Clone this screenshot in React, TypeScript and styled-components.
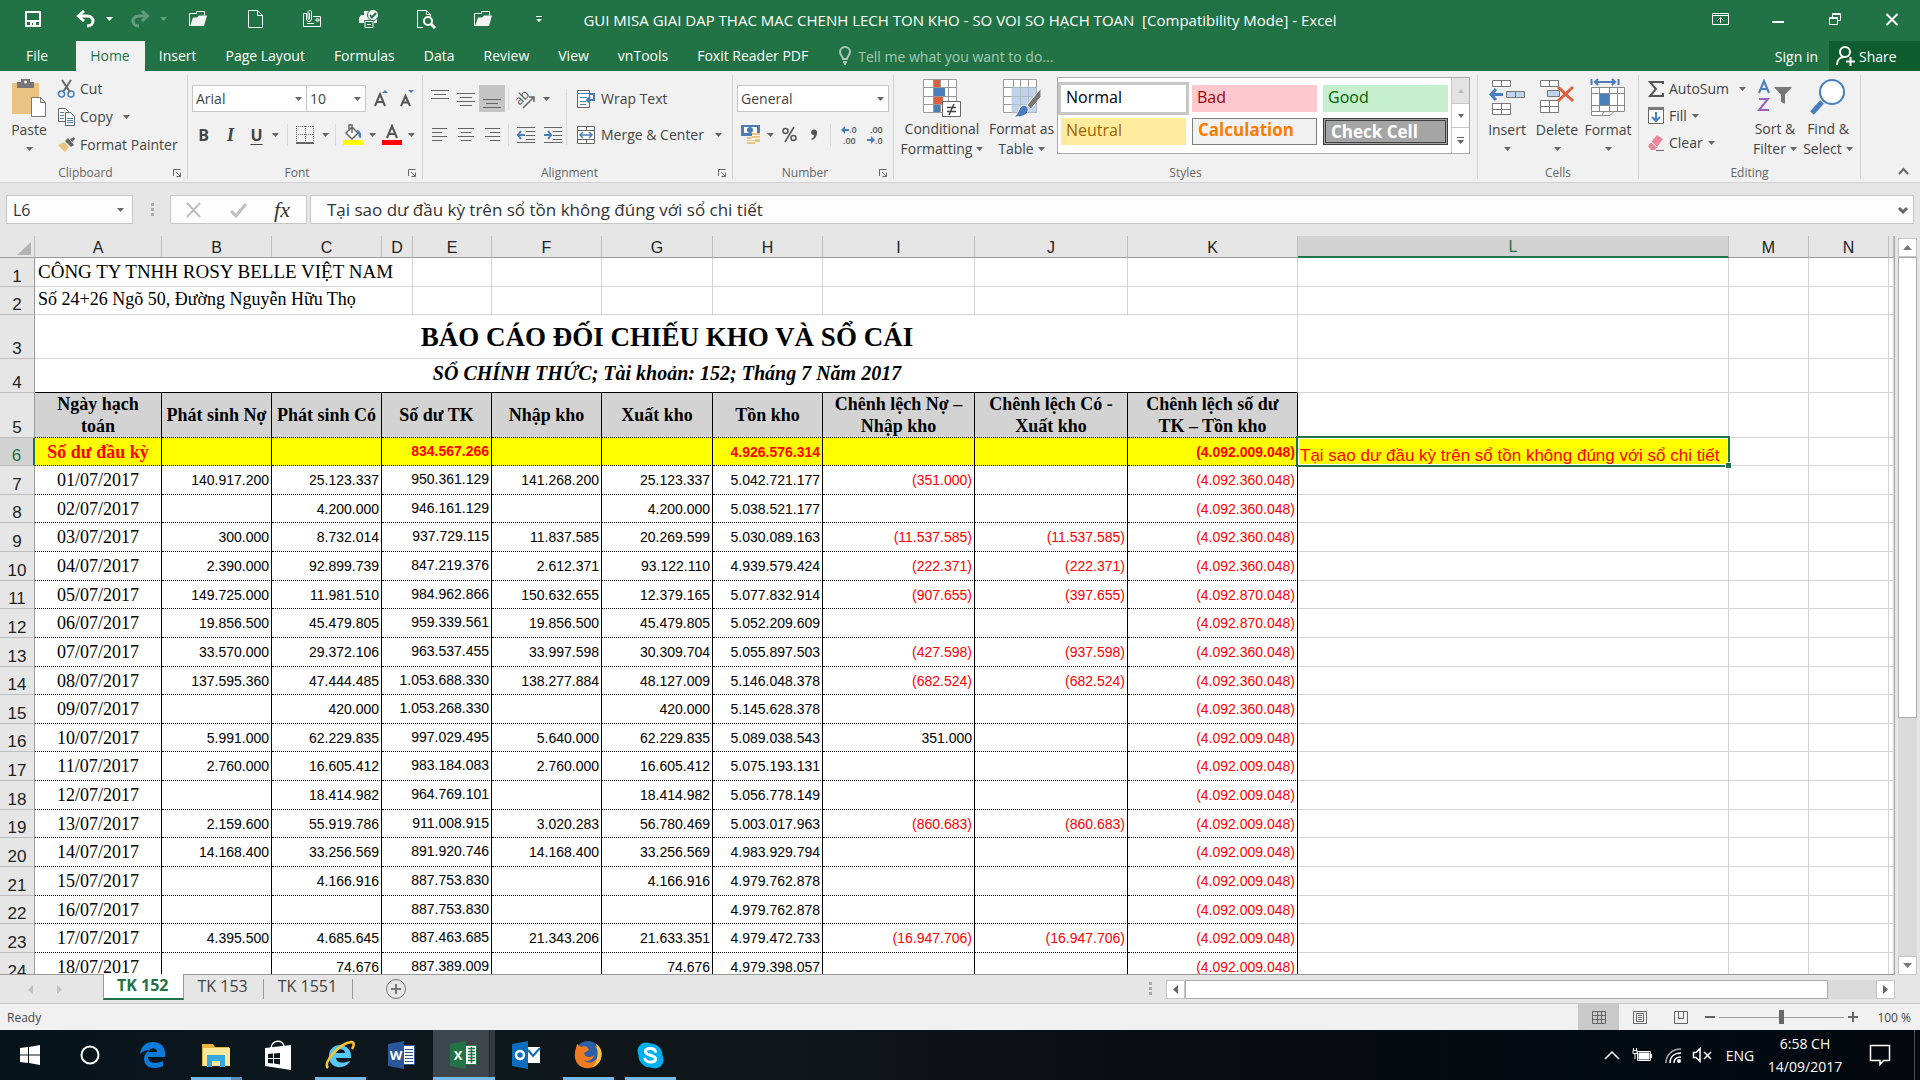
import React from "react";
import styled, { createGlobalStyle, css } from "styled-components";

const ui = '"Open Sans", "Noto Sans", sans-serif';
const arial = '"Liberation Sans", Arial, sans-serif';
const times = '"Liberation Serif", "Times New Roman", serif';
const green = "#217346";
const line = "#c6c6c6";
const ink = "#444444";
const blue = "#4a7ebb";

const Global = createGlobalStyle`
  *, *::before, *::after { box-sizing: border-box; }
  body { margin: 0; font-family: ${ui}; font-size: 14px; color: ${ink}; }
  button, input, select { font: inherit; color: inherit; margin: 0; padding: 0; border: 0; border-radius: 0; background: none; outline: none; }
  svg { display: block; flex: none; overflow: visible; }
`;

const Screen = styled.div`
  display: flex;
  flex-direction: column;
  height: 100vh;
  overflow: hidden;
  background: #e6e6e6;
`;

/* ---------- shared drawing helpers ---------- */

type IconProps = { w: number; h: number; children: React.ReactNode; stroke?: string; sw?: number };
const Icon = ({ w, h, children, stroke = "#666", sw = 1 }: IconProps) => (
  <svg width={w} height={h} viewBox={`0 0 ${w} ${h}`} fill="none" stroke={stroke} strokeWidth={sw} aria-hidden="true">
    {children}
  </svg>
);
const Down = ({ color = "#666" }: { color?: string }) => (
  <Icon w={7} h={4} stroke="none"><path d="M0 0h7L3.5 4z" fill={color} /></Icon>
);
const DotsV = () => (
  <Icon w={4} h={14} stroke="none"><path d="M1 0h3v3h-3zM1 5h3v3h-3zM1 10h3v3h-3z" fill="#ababab" /></Icon>
);

/* ---------- title bar ---------- */

const TitleBar = styled.header`
  display: grid;
  grid-template-columns: minmax(0, 1fr) auto minmax(0, 1fr);
  height: 41px;
  flex: none;
  background: ${green};
  color: #fff;
`;
const QuickAccess = styled.div`
  display: flex;
  align-items: center;
  gap: 25px;
  height: 38px;
  padding-left: 17px;
`;
const QuickPair = styled.div`
  display: flex;
  gap: 8px;
  margin: 0 -13px 0 -4px;
`;
const QuickButton = styled.button<{ $w?: number; $dim?: boolean }>`
  display: flex;
  align-items: center;
  justify-content: center;
  width: ${(p) => p.$w ?? 32}px;
  height: 28px;
  opacity: ${(p) => (p.$dim ? 0.3 : 1)};
`;
const SplitIcon = styled.div`
  display: flex;
`;
const DocTitle = styled.h1`
  margin: 0;
  font-size: 15px;
  font-weight: 400;
  line-height: 41px;
  white-space: pre;
`;
const WindowControls = styled.div`
  display: flex;
  justify-content: flex-end;
`;
const WindowButton = styled.button`
  display: flex;
  align-items: center;
  justify-content: center;
  width: 57px;
  height: 38px;
`;

const FolderIcon = () => (
  <Icon w={18} h={16} stroke="#fff">
    <path d="M.5 15V2.500h7v-2h8v4" />
    <path d="M1 15L4 6.500h4l2-2h8L15 15z" fill="#f2f2f2" stroke="none" />
  </Icon>
);

/* ---------- ribbon tabs ---------- */

const TabBar = styled.nav`
  display: flex;
  height: 30px;
  flex: none;
  background: ${green};
  color: #fff;
`;
const RibbonTab = styled.button<{ $active?: boolean; $file?: boolean }>`
  padding: ${(p) => (p.$file ? "0 28px 0 26px" : "0 15px 0 14px")};
  line-height: 30px;
  white-space: nowrap;
  ${(p) => p.$active && css`background: #f1f1f1; color: ${green};`}
`;
const TellMe = styled.label`
  display: flex;
  align-items: center;
  gap: 7px;
  flex: 1;
  padding-left: 16px;
`;
const TellMeInput = styled.input`
  flex: 1;
  min-width: 0;
  height: 28px;
  &::placeholder { color: #a6c7b5; opacity: 1; }
`;
const SignIn = styled.button`
  padding: 0 11px;
`;
const ShareButton = styled.button`
  display: flex;
  align-items: center;
  gap: 4px;
  width: 91px;
  padding-left: 7px;
  background: #0f5c2f;
`;

/* ---------- ribbon ---------- */

const Ribbon = styled.section`
  display: flex;
  flex: none;
  height: 112px;
  padding: 4px 0 3px;
  background: #f1f1f1;
  border-bottom: 1px solid #d2d2d2;
`;
const GroupBox = styled.section<{ $w: number; $grow?: boolean }>`
  display: flex;
  flex-direction: column;
  flex: ${(p) => (p.$grow ? 1 : 0)} 0 ${(p) => p.$w}px;
  border-right: 1px solid #d2d2d2;
`;
const GroupBody = styled.div<{ $indent?: number }>`
  display: flex;
  flex: 1;
  padding-left: ${(p) => p.$indent ?? 0}px;
`;
const GroupLabel = styled.div`
  display: flex;
  align-items: center;
  height: 13px;
  font-size: 12px;
  line-height: 16px;
  color: #666;
`;
const Launcher = styled.button`
  width: 16px;
  padding-left: 2px;
`;
const LabelText = styled.span`
  flex: 1;
  text-align: center;
`;
type GroupProps = { w: number; label: string; indent?: number; launcher?: boolean; grow?: boolean; children: React.ReactNode };
const Group = ({ w, label, indent, launcher, grow, children }: GroupProps) => (
  <GroupBox $w={w} $grow={grow} aria-label={label}>
    <GroupBody $indent={indent}>{children}</GroupBody>
    <GroupLabel>
      <LabelText>{label}</LabelText>
      {launcher && (
        <Launcher aria-label={`${label} settings`}>
          <Icon w={8} h={8}><path d="M.5 7V.5h7M3 3l4 4M7.500 3.500v4h-4" /></Icon>
        </Launcher>
      )}
    </GroupLabel>
  </GroupBox>
);
const Stack = styled.div<{ $pad?: string; $gap?: number; $w?: number }>`
  display: flex;
  flex-direction: column;
  gap: ${(p) => p.$gap ?? 9}px;
  width: ${(p) => (p.$w ? p.$w + "px" : "auto")};
  padding: ${(p) => p.$pad ?? "10px 0 0 4px"};
`;
const Line = styled.div`
  display: flex;
  align-items: center;
  height: 27px;
`;
const BigButton = styled.button<{ $w: number }>`
  display: flex;
  flex-direction: column;
  align-items: center;
  width: ${(p) => p.$w}px;
  height: 84px;
  padding-top: 4px;
  line-height: 20px;
  & > svg { margin-top: 7px; }
`;
const BigIcon = styled.span`
  display: flex;
  align-items: flex-start;
  justify-content: center;
  height: 41px;
`;
const BigText = styled.span`
  display: flex;
  align-items: center;
  gap: 4px;
  white-space: nowrap;
`;
const SmallButton = styled.button<{ $gap?: number }>`
  display: flex;
  align-items: center;
  gap: ${(p) => p.$gap ?? 5}px;
  height: 27px;
  white-space: nowrap;
`;
const ArrowSlot = styled.span`
  margin-left: 5px;
`;
const Tool = styled.button<{ $w: number; $on?: boolean }>`
  display: flex;
  align-items: center;
  justify-content: center;
  width: ${(p) => p.$w}px;
  height: 27px;
  background: ${(p) => (p.$on ? "#c5c5c5" : "none")};
`;
const Glyph = styled.span<{ $kind?: "b" | "i" | "u" }>`
  font-size: 16px;
  font-weight: 700;
  line-height: 20px;
  ${(p) => p.$kind === "i" && css`font-family: ${times}; font-style: italic; font-size: 18px;`}
  ${(p) => p.$kind === "u" && css`text-decoration: underline; text-underline-offset: 3px;`}
`;
const Divider = styled.span<{ $l: number; $r: number }>`
  width: 1px;
  height: 22px;
  margin: 0 ${(p) => p.$r}px 0 ${(p) => p.$l}px;
  background: #d8d8d8;
`;
const TallDivider = styled.span`
  width: 1px;
  height: 56px;
  margin: 14px 8px 0 0;
  background: #d8d8d8;
`;
const ComboBox = styled.label<{ $w: number }>`
  display: grid;
  grid-template-columns: 1fr 16px;
  align-items: center;
  width: ${(p) => p.$w}px;
  height: 27px;
  border: 1px solid ${line};
  background: #fff;
  & + & { margin-left: -1px; }
`;
const ComboSelect = styled.select`
  grid-area: 1 / 1 / 2 / 3;
  appearance: none;
  width: 100%;
  height: 25px;
  padding-left: 3px;
`;
const ComboArrow = styled.span`
  grid-area: 1 / 2;
  padding-left: 5px;
  pointer-events: none;
`;
const Combo = ({ w, value, label }: { w: number; value: string; label: string }) => (
  <ComboBox $w={w}>
    <ComboSelect aria-label={label} defaultValue={value}><option>{value}</option></ComboSelect>
    <ComboArrow><Down /></ComboArrow>
  </ComboBox>
);

const Gallery = styled.div`
  display: flex;
  flex: 1;
  height: 77px;
  margin: 2px 7px 0 0;
  border: 1px solid #ababab;
  background: #fff;
`;
const Swatches = styled.div`
  display: grid;
  grid-template-columns: repeat(3, 1fr);
  grid-auto-rows: 27px;
  gap: 6px;
  flex: 1;
  padding: 7px 3px 0;
`;
const Swatch = styled.button<{ $bg: string; $fg: string; $edge?: string; $bold?: boolean; $picked?: boolean }>`
  display: flex;
  align-items: flex-start;
  padding-left: 5px;
  font-size: ${(p) => (p.$bold ? 17 : 16)}px;
  line-height: ${(p) => (p.$bold ? 22 : 25)}px;
  font-weight: ${(p) => (p.$bold ? 700 : 400)};
  background: ${(p) => p.$bg};
  color: ${(p) => p.$fg};
  border: ${(p) => p.$edge ?? "0"};
  outline: ${(p) => (p.$picked ? "3px solid #c6c6c6" : "none")};
`;
const GalleryScroll = styled.div`
  display: grid;
  grid-template-rows: 25px 24px 1fr;
  width: 18px;
  border-left: 1px solid ${line};
`;
const GalleryButton = styled.button<{ $off?: boolean }>`
  display: flex;
  flex-direction: column;
  align-items: center;
  justify-content: center;
  background: ${(p) => (p.$off ? "#e3e3e3" : "#fff")};
  & + & { border-top: 1px solid ${line}; }
`;
const RibbonEnd = styled.div`
  display: flex;
  align-items: flex-end;
  justify-content: center;
  width: 59px;
  padding: 0 0 4px 26px;
`;

/* ---------- formula bar ---------- */

const FormulaRow = styled.div`
  display: flex;
  flex: none;
  height: 53px;
  padding: 12px 6px 12px;
  color: #333;
`;
const NameBox = styled.label`
  display: flex;
  align-items: center;
  width: 127px;
  padding-right: 8px;
  border: 1px solid ${line};
  background: #fdfdfd;
`;
const NameInput = styled.input`
  flex: 1;
  min-width: 0;
  padding-left: 6px;
  font-size: 16px;
`;
const Grip = styled.span`
  display: flex;
  align-items: center;
  justify-content: center;
  width: 37px;
`;
const FxBox = styled.div`
  display: flex;
  align-items: center;
  width: 137px;
  margin-right: 3px;
  border: 1px solid ${line};
  background: #fdfdfd;
`;
const FxText = styled.span`
  font: italic 22px/22px ${times};
`;
const FormulaBox = styled.label`
  display: flex;
  flex: 1;
  align-items: center;
  padding-right: 5px;
  border: 1px solid ${line};
  background: #fdfdfd;
`;
const FormulaInput = styled.input`
  flex: 1;
  min-width: 0;
  padding-left: 16px;
  font-size: 17px;
`;

/* ---------- worksheet ---------- */

const Workspace = styled.main`
  display: flex;
  flex: 1;
  min-height: 0;
`;
const SheetView = styled.div`
  flex: 1;
  min-width: 0;
  overflow: hidden;
  border-right: 1px solid #ababab;
  border-bottom: 1px solid #999;
  background: #fff;
`;
const Sheet = styled.table`
  width: 100%;
  table-layout: fixed;
  border-collapse: separate;
  border-spacing: 0;
  font-family: ${arial};
  color: #000;
`;
const SheetRow = styled.tr<{ $h: number }>`
  height: ${(p) => p.$h}px;
`;
const ColHead = styled.th<{ $on?: boolean }>`
  padding: ${(p) => (p.$on ? 1 : 2)}px 0 0;
  border-right: 1px solid #bdbdbd;
  border-bottom: ${(p) => (p.$on ? `2px solid ${green}` : "1px solid #999")};
  background: ${(p) => (p.$on ? "#d2d2d2" : "#e6e6e6")};
  color: ${(p) => (p.$on ? green : "#222")};
  font-size: 16px;
  font-weight: 400;
  line-height: 19px;
  vertical-align: top;
`;
const Corner = styled.th`
  padding: 4px 3px 0 0;
  border-right: 1px solid #bdbdbd;
  border-bottom: 1px solid #999;
  background: #e6e6e6;
`;
const CornerMark = styled.div`
  display: flex;
  justify-content: flex-end;
`;
const RowHead = styled.th<{ $on?: boolean }>`
  padding: 0;
  border-right: ${(p) => (p.$on ? `2px solid ${green}` : "1px solid #999")};
  border-bottom: 1px solid #bdbdbd;
  background: ${(p) => (p.$on ? "#d2d2d2" : "#e6e6e6")};
  color: ${(p) => (p.$on ? green : "#222")};
  font-size: 17px;
  font-weight: 400;
  line-height: 19px;
  vertical-align: bottom;
`;
const Cell = styled.td<{ $ink?: boolean }>`
  padding: 0 0 0 2px;
  border-right: 1px solid #d4d4d4;
  border-bottom: 1px solid ${(p) => (p.$ink ? "#000" : "#d4d4d4")};
  white-space: nowrap;
`;
const Company = styled(Cell)<{ $size: number }>`
  padding-left: 3px;
  font-family: ${times};
  font-size: ${(p) => p.$size}px;
  line-height: 24px;
`;
const Address = styled(Company)`
  padding-bottom: 3px;
`;
const ReportTitle = styled(Cell)`
  text-align: center;
  font: 700 27px/34px ${times};
`;
const ReportSub = styled(Cell)`
  padding-bottom: 5px;
  text-align: center;
  font: italic 700 20px/26px ${times};
`;
const FieldHead = styled.td`
  padding: 0;
  border-right: 1px solid #000;
  border-bottom: 1px dotted #000;
  background: #d3d3d3;
  text-align: center;
  white-space: pre-line;
  font: 700 18px/22px ${times};
`;
const DataCell = styled.td<{ $date?: boolean; $first?: boolean; $red?: boolean; $raised?: boolean }>`
  padding: 0 2px ${(p) => (p.$raised ? 2 : 0)}px 0;
  border-right: 1px solid #000;
  border-bottom: 1px dotted #000;
  text-align: right;
  font-size: 14px;
  line-height: 22px;
  ${(p) => p.$red && css`color: #ff0000;`}
  ${(p) => p.$first && css`background: #ffff00; color: #ff0000; font-weight: 700;`}
  ${(p) => p.$date && css`padding: 0; text-align: center; font-family: ${times}; font-size: 18px;`}
`;
const ActiveCell = styled(Cell)`
  position: relative;
  background: #ffff00;
  color: #ff0000;
  font-size: 17px;
  line-height: 19px;
  vertical-align: bottom;
`;
const Selection = styled.span`
  position: absolute;
  inset: -2px -2px -2px -2px;
  border: 2px solid ${green};
  box-shadow: inset 0 0 0 1px #fff;
  &::after {
    content: "";
    position: absolute;
    right: -4px;
    bottom: -4px;
    width: 7px;
    height: 7px;
    border: 1px solid #fff;
    background: ${green};
  }
`;

const ScrollColumn = styled.div`
  display: flex;
  flex-direction: column;
  width: 25px;
  padding: 2px 3px 0;
`;
const ScrollButton = styled.button`
  display: flex;
  align-items: center;
  justify-content: center;
  flex: none;
  width: 19px;
  height: 19px;
  border: 1px solid ${line};
  background: #fff;
`;
const TrackV = styled.div`
  flex: 1;
  background: #dadada;
`;
const ThumbV = styled.div`
  height: 66%;
  border: 1px solid #ababab;
  background: #fff;
`;

/* ---------- sheet tabs ---------- */

const SheetTabs = styled.div`
  display: flex;
  flex: none;
  height: 29px;
  border-bottom: 1px solid ${line};
`;
const TabNav = styled.div`
  display: flex;
  align-items: center;
  gap: 24px;
  width: 103px;
  padding: 0 0 0 28px;
`;
const SheetTab = styled.button<{ $on?: boolean }>`
  height: ${(p) => (p.$on ? 26 : 20)}px;
  margin-top: ${(p) => (p.$on ? -1 : 4)}px;
  padding: ${(p) => (p.$on ? "0 14px 2px 13px" : "0 15px 7px 14px")};
  font-size: 16px;
  line-height: ${(p) => (p.$on ? 22 : 14)}px;
  border-right: 1px solid #999;
  ${(p) => p.$on && css`
    position: relative;
    border-left: 1px solid #999;
    border-bottom: 2px solid ${green};
    background: #fff;
    color: ${green};
    font-weight: 700;
  `}
`;
const AddSheet = styled.button`
  display: flex;
  align-items: center;
  padding-left: 33px;
`;
const HScroll = styled.div`
  display: flex;
  align-items: center;
  width: 772px;
  margin-left: auto;
  padding-right: 25px;
`;
const HGrip = styled.span`
  width: 18px;
`;
const TrackH = styled.div`
  flex: 1;
  height: 19px;
  background: #dadada;
`;
const ThumbH = styled.div`
  width: 93%;
  height: 19px;
  border: 1px solid #ababab;
  background: #fff;
`;

/* ---------- status bar ---------- */

const StatusBar = styled.footer`
  display: flex;
  align-items: center;
  flex: none;
  height: 26px;
  padding-left: 7px;
  background: #f1f1f1;
  font-size: 12px;
`;
const Views = styled.div`
  display: flex;
  margin-left: auto;
`;
const ViewButton = styled.button<{ $on?: boolean }>`
  display: flex;
  align-items: center;
  justify-content: center;
  width: 41px;
  height: 26px;
  background: ${(p) => (p.$on ? "#c9c9c9" : "none")};
`;
const ZoomButton = styled.button`
  padding: 6px 4px;
`;
const ZoomRange = styled.input`
  appearance: none;
  width: 125px;
  height: 14px;
  background: linear-gradient(#a0a0a0, #a0a0a0) center / 100% 1px no-repeat;
  &::-webkit-slider-thumb {
    appearance: none;
    width: 5px;
    height: 14px;
    background: #666;
  }
`;
const ZoomLevel = styled.span`
  width: 58px;
  padding-right: 9px;
  text-align: right;
`;

/* ---------- taskbar ---------- */

const Taskbar = styled.footer`
  display: flex;
  flex: none;
  height: 50px;
  background: linear-gradient(90deg, #07131b, #0b161d 12%, #10171a 40%, #080d10 60%, #020a12 85%, #03080e);
  color: #fff;
`;
type TaskState = "open" | "stacked" | "active";
const bars: Record<TaskState, string> = {
  open: "linear-gradient(#76b9ed, #76b9ed) center bottom / 51px 3px no-repeat",
  stacked: "linear-gradient(90deg, #76b9ed 40px, #5a8db8 40px) center bottom / 51px 3px no-repeat",
  active: "linear-gradient(#76b9ed, #76b9ed) center bottom / 100% 3px no-repeat, linear-gradient(90deg, #3d464c 56px, #22292d 56px, #22292d 57px, #333b40 57px)",
};
const TaskButton = styled.button<{ $w?: number; $state?: TaskState }>`
  display: flex;
  align-items: center;
  justify-content: center;
  width: ${(p) => p.$w ?? 62}px;
  height: 50px;
  background: ${(p) => (p.$state ? bars[p.$state] : "none")};
`;
const Tray = styled.div`
  display: flex;
  align-items: center;
  margin-left: auto;
`;
const TrayButton = styled.button<{ $w: number }>`
  display: flex;
  align-items: center;
  justify-content: center;
  width: ${(p) => p.$w}px;
  height: 50px;
  text-align: center;
  line-height: 23px;
`;
const ShowDesktop = styled.button`
  width: 6px;
  height: 50px;
  border-left: 1px solid #4a5158;
`;

/* ---------- data ---------- */

const columns: [string, number | null][] = [
  ["A", 127], ["B", 110], ["C", 110], ["D", 31], ["E", 79], ["F", 110], ["G", 111], ["H", 110],
  ["I", 152], ["J", 153], ["K", 170], ["L", null], ["M", 80], ["N", 80], ["", 5],
];
const heads = ["Ngày hạch\ntoán", "Phát sinh Nợ", "Phát sinh Có", "Số dư TK", "Nhập kho", "Xuất kho", "Tồn kho", "Chênh lệch Nợ –\nNhập kho", "Chênh lệch Có -\nXuất kho", "Chênh lệch số dư\nTK – Tồn kho"];
const records = `Số dư đầu kỳ|||834.567.266|||4.926.576.314|||(4.092.009.048)
01/07/2017|140.917.200|25.123.337|950.361.129|141.268.200|25.123.337|5.042.721.177|(351.000)||(4.092.360.048)
02/07/2017||4.200.000|946.161.129||4.200.000|5.038.521.177|||(4.092.360.048)
03/07/2017|300.000|8.732.014|937.729.115|11.837.585|20.269.599|5.030.089.163|(11.537.585)|(11.537.585)|(4.092.360.048)
04/07/2017|2.390.000|92.899.739|847.219.376|2.612.371|93.122.110|4.939.579.424|(222.371)|(222.371)|(4.092.360.048)
05/07/2017|149.725.000|11.981.510|984.962.866|150.632.655|12.379.165|5.077.832.914|(907.655)|(397.655)|(4.092.870.048)
06/07/2017|19.856.500|45.479.805|959.339.561|19.856.500|45.479.805|5.052.209.609|||(4.092.870.048)
07/07/2017|33.570.000|29.372.106|963.537.455|33.997.598|30.309.704|5.055.897.503|(427.598)|(937.598)|(4.092.360.048)
08/07/2017|137.595.360|47.444.485|1.053.688.330|138.277.884|48.127.009|5.146.048.378|(682.524)|(682.524)|(4.092.360.048)
09/07/2017||420.000|1.053.268.330||420.000|5.145.628.378|||(4.092.360.048)
10/07/2017|5.991.000|62.229.835|997.029.495|5.640.000|62.229.835|5.089.038.543|351.000||(4.092.009.048)
11/07/2017|2.760.000|16.605.412|983.184.083|2.760.000|16.605.412|5.075.193.131|||(4.092.009.048)
12/07/2017||18.414.982|964.769.101||18.414.982|5.056.778.149|||(4.092.009.048)
13/07/2017|2.159.600|55.919.786|911.008.915|3.020.283|56.780.469|5.003.017.963|(860.683)|(860.683)|(4.092.009.048)
14/07/2017|14.168.400|33.256.569|891.920.746|14.168.400|33.256.569|4.983.929.794|||(4.092.009.048)
15/07/2017||4.166.916|887.753.830||4.166.916|4.979.762.878|||(4.092.009.048)
16/07/2017|||887.753.830|||4.979.762.878|||(4.092.009.048)
17/07/2017|4.395.500|4.685.645|887.463.685|21.343.206|21.633.351|4.979.472.733|(16.947.706)|(16.947.706)|(4.092.009.048)
18/07/2017||74.676|887.389.009||74.676|4.979.398.057|||(4.092.009.048)`.split("\n").map((r) => r.split("|"));
const rowHeights = [28, 29, 28, 29, 29, 28, 29, 29, 28, 29, 28, 29, 29, 28, 29, 29, 28, 29, 29];
const question = "Tại sao dư đầu kỳ trên sổ tồn không đúng với sổ chi tiết";

const Blank = ({ n }: { n: number }) => (
  <>{Array.from({ length: n }, (_, i) => <Cell key={i} />)}</>
);

const Worksheet = () => (
  <Sheet>
    <colgroup>
      <col width={35} />
      {columns.map(([name, w]) => <col key={name} width={w ?? undefined} />)}
    </colgroup>
    <thead>
      <SheetRow $h={22}>
        <Corner><CornerMark><Icon w={14} h={13} stroke="none"><path d="M14 0v13H0z" fill="#b3b3b3" /></Icon></CornerMark></Corner>
        {columns.map(([name]) => <ColHead key={name} scope="col" $on={name === "L"}>{name}</ColHead>)}
      </SheetRow>
    </thead>
    <tbody>
      <SheetRow $h={29}><RowHead scope="row">1</RowHead><Company $size={19} colSpan={4}>CÔNG TY TNHH ROSY BELLE VIỆT NAM</Company><Blank n={11} /></SheetRow>
      <SheetRow $h={28}><RowHead scope="row">2</RowHead><Address $size={18} colSpan={4}>Số 24+26 Ngõ 50, Đường Nguyễn Hữu Thọ</Address><Blank n={11} /></SheetRow>
      <SheetRow $h={44}><RowHead scope="row">3</RowHead><ReportTitle colSpan={11}>BÁO CÁO ĐỐI CHIẾU KHO VÀ SỔ CÁI</ReportTitle><Blank n={4} /></SheetRow>
      <SheetRow $h={34}><RowHead scope="row">4</RowHead><ReportSub $ink colSpan={11}>SỔ CHÍNH THỨC; Tài khoản: 152; Tháng 7 Năm 2017</ReportSub><Blank n={4} /></SheetRow>
      <SheetRow $h={45}>
        <RowHead scope="row">5</RowHead>
        {heads.map((h, i) => <FieldHead key={h} colSpan={i === 3 ? 2 : 1}>{h}</FieldHead>)}
        <Blank n={4} />
      </SheetRow>
      {records.map((r, ri) => (
        <SheetRow key={r[0]} $h={rowHeights[ri]}>
          <RowHead scope="row" $on={ri === 0}>{ri + 6}</RowHead>
          {r.map((v, i) => (
            <DataCell key={i} colSpan={i === 3 ? 2 : 1} $date={i === 0} $first={ri === 0} $raised={i === 3} $red={v.startsWith("(")}>{v}</DataCell>
          ))}
          {ri === 0 ? <><ActiveCell>{question}<Selection /></ActiveCell><Blank n={3} /></> : <Blank n={4} />}
        </SheetRow>
      ))}
    </tbody>
  </Sheet>
);

const alignPath = (rows: [number, number][], y0: number) => rows.map(([a, b], i) => `M${a} ${y0 + i * 4 + 0.5}H${b}`).join("");
const GridDoc = () => (<path d="M.5.5h33v33H.5zM.5 8.500h33M.5 17.500h33M.5 25.500h33M10.500.5v33M17.500.5v33M25.500.5v33" fill="#fff" stroke="#999" />);

const OfficeIcon = ({ color, letter, children }: { color: string; letter: string; children: React.ReactNode }) => (
  <Icon w={28} h={28} stroke="none">
    <path d="M15 4.500h11.500v19H15z" fill="#fff" stroke={color} />
    {children}
    <path d="M0 3L16 0v28L0 25z" fill={color} />
    <text x="8" y="19" textAnchor="middle" fontFamily="Open Sans" fontSize="13" fontWeight="700" fill="#fff">{letter}</text>
  </Icon>
);

export default function App() {
  return (
    <Screen>
      <Global />
      <TitleBar>
        <QuickAccess>
          <QuickButton aria-label="Save"><Icon w={16} h={16} stroke="#fff" sw={2}><path d="M1 1h14v14H1zM2 10h12" /><path d="M5 11h6v4H8v-3H7v3H5z" fill="#fff" stroke="none" /></Icon></QuickButton>
          <QuickPair>
            <SplitIcon>
              <QuickButton aria-label="Undo"><Icon w={18} h={16} stroke="#fff" sw={3}><path d="M3 5h7c8 0 8 10 0 10" /><path d="M7 0L1.500 5 7 10" /></Icon></QuickButton>
              <QuickButton $w={14} aria-label="Undo list"><Down color="#fff" /></QuickButton>
            </SplitIcon>
            <SplitIcon>
              <QuickButton $dim aria-label="Redo"><Icon w={18} h={16} stroke="#fff" sw={3}><path d="M15 5H8c-8 0-8 10 0 10" /><path d="M11 0l5.500 5-5.500 5" /></Icon></QuickButton>
              <QuickButton $w={14} $dim aria-label="Redo list"><Down color="#fff" /></QuickButton>
            </SplitIcon>
          </QuickPair>
          <QuickButton aria-label="Open"><FolderIcon /></QuickButton>
          <QuickButton aria-label="New"><Icon w={15} h={18} stroke="#fff"><path d="M.5.5h9l5 5v12H.5zM9.500.5v5h5" /></Icon></QuickButton>
          <QuickButton aria-label="Email"><Icon w={18} h={18} stroke="#fff"><path d="M3 3.500H.5v13h17v-10H10M4 13.500h7M13 9h3v2h-3z" /><path d="M3.500 3v6a2.500 2.500 0 0 0 5 0V1.500a2 2 0 0 0-3.500 0V9h1.500V3" /></Icon></QuickButton>
          <QuickButton aria-label="Quick print"><Icon w={20} h={18} stroke="none"><path d="M5 5V1h5v4zM2 5h16v8h-3v-3H5v3H0V8z" fill="#f2f2f2" /><path d="M6 11.500h8v6H6zM8 14.500h4" fill={green} stroke="#fff" /><circle cx="14" cy="5" r="5.500" fill="#f2f2f2" stroke={green} /><path d="M11 5l2 2.500L17 3" fill="none" stroke={green} strokeWidth="2" /></Icon></QuickButton>
          <QuickButton aria-label="Print preview"><Icon w={18} h={18} stroke="#fff"><path d="M6 17.500H.5V.5h9l4 4v2M9.500.5v4h4" /><circle cx="11" cy="11" r="4" strokeWidth="2" /><path d="M14 14l4 4" strokeWidth="3" /></Icon></QuickButton>
          <QuickButton aria-label="Open folder"><FolderIcon /></QuickButton>
          <QuickButton $w={30} aria-label="Customize"><Icon w={6} h={6} stroke="none"><path d="M0 0h6v1H0zM0 3h6L3 6z" fill="#fff" /></Icon></QuickButton>
        </QuickAccess>
        <DocTitle>{"GUI MISA GIAI DAP THAC MAC CHENH LECH TON KHO - SO VOI SO HẠCH TOAN  [Compatibility Mode] - Excel"}</DocTitle>
        <WindowControls>
          <WindowButton aria-label="Ribbon display"><Icon w={17} h={12} stroke="#fff"><path d="M.5.5h16v11H.5zM1 2.500h15M8.500 10V5M5.500 7.500l3-3 3 3" /></Icon></WindowButton>
          <WindowButton aria-label="Minimize"><Icon w={12} h={8} stroke="#fff" sw={2}><path d="M0 7h12" /></Icon></WindowButton>
          <WindowButton aria-label="Restore"><Icon w={12} h={12} stroke="#fff"><path d="M.5 4.500h8v7h-8zM.5 5.500h8M3.500 4V.5h8v7H9M3.500 1.500h8" /></Icon></WindowButton>
          <WindowButton aria-label="Close"><Icon w={12} h={11} stroke="#fff" sw={2}><path d="M.5 0l11 11M11.500 0l-11 11" /></Icon></WindowButton>
        </WindowControls>
      </TitleBar>

      <TabBar>
        <RibbonTab $file>File</RibbonTab>
        {["Home", "Insert", "Page Layout", "Formulas", "Data", "Review", "View", "vnTools", "Foxit Reader PDF"].map((t) => (
          <RibbonTab key={t} $active={t === "Home"}>{t}</RibbonTab>
        ))}
        <TellMe>
          <Icon w={12} h={18} stroke="#a6c7b5" sw={2}><path d="M4 12c0-3-3-3.500-3-7a5 5 0 0 1 10 0c0 3.500-3 4-3 7zM4 15h4M5 17h2" /></Icon>
          <TellMeInput aria-label="Tell me what you want to do" placeholder="Tell me what you want to do..." />
        </TellMe>
        <SignIn>Sign in</SignIn>
        <ShareButton><Icon w={19} h={20} stroke="#fff" sw={2}><circle cx="9" cy="6" r="5" /><path d="M1 19c0-5 3-8 7-8M10 15.500h9M14.500 11v9" /></Icon>Share</ShareButton>
      </TabBar>

      <Ribbon>
        <Group w={188} label="Clipboard" launcher>
          <BigButton $w={58}>
            <BigIcon><Icon w={34} h={38} stroke="none"><path d="M0 4h27v31H0z" fill="#eac282" /><path d="M5 3h4V0h9v3h4v6H5z" fill="#777" /><circle cx="13.500" cy="3" r="1.500" fill="#f1f1f1" /><path d="M19.500 18.500h9l5 5v14h-14zM28.500 18.500v5h5" fill="#fff" stroke="#777" /></Icon></BigIcon>
            <BigText>Paste</BigText>
            <Down />
          </BigButton>
          <Stack $pad="0" $gap={1}>
            <SmallButton><Icon w={17} h={18} stroke="#666" sw={2}><path d="M4 0l8 12M13 0L5 12" /><circle cx="3.500" cy="14" r="3" stroke={blue} strokeWidth="1.500" /><circle cx="13" cy="14" r="3" stroke={blue} strokeWidth="1.500" /></Icon>Cut</SmallButton>
            <SmallButton><Icon w={17} h={18}><path d="M.5.5h7l3 3v10H.5z" fill="#fff" /><path d="M7.500 4.500h5l4 4v9h-9z" fill="#fff" /><path d="M9 10.500h6M9 12.500h6M9 14.500h6M2 4.500h4M2 7.500h4M2 10.500h4" stroke={blue} /></Icon>Copy<ArrowSlot><Down /></ArrowSlot></SmallButton>
            <SmallButton><Icon w={17} h={15} stroke="none"><path d="M0 8l6-3 5 5-4 5z" fill="#eac282" /><path d="M7 4l3-3 6 7-3 2zM12 2l4-2 1 2-3 3z" fill="#666" /></Icon>Format Painter</SmallButton>
          </Stack>
        </Group>

        <Group w={235} label="Font" launcher>
          <Stack>
            <Line>
              <Combo w={115} value="Arial" label="Font name" /><Combo w={60} value="10" label="Font size" />
              <Tool $w={30} aria-label="Grow font"><Icon w={14} h={18} stroke="#555" sw={2}><path d="M1 16L6 4l5 12M3 12h6" /><path d="M8 3l3-3 3 3z" fill={blue} stroke="none" /></Icon></Tool>
              <Tool $w={22} aria-label="Shrink font"><Icon w={14} h={18} stroke="#555" sw={2}><path d="M1 16L5.500 6 10 16M3 12.500h5" /><path d="M8 0h6l-3 3z" fill={blue} stroke="none" /></Icon></Tool>
            </Line>
            <Line>
              <Tool $w={23} aria-label="Bold"><Glyph $kind="b">B</Glyph></Tool>
              <Tool $w={31} aria-label="Italic"><Glyph $kind="i">I</Glyph></Tool>
              <Tool $w={21} aria-label="Underline"><Glyph $kind="u">U</Glyph></Tool>
              <Tool $w={17} aria-label="Underline style"><Down /></Tool>
              <Divider $l={3} $r={3} />
              <Tool $w={28} aria-label="Borders"><Icon w={18} h={18}><path d="M.5 0v17M17.500 0v17M9.500 0v17M0 .5h18M0 8.500h18" strokeDasharray="1 1" /><path d="M0 17h18" strokeWidth="2" /></Icon></Tool>
              <Tool $w={12} aria-label="Border list"><Down /></Tool>
              <Divider $l={4} $r={4} />
              <Tool $w={26} aria-label="Fill color"><Icon w={20} h={20}><path d="M3 8l6-6 6 6-6 6zM9 8V0h-3v5" fill="#fff" strokeWidth="1.500" /><path d="M14 5c3 0 5 4 4 8-3 0-2-4-4-6z" fill={blue} stroke="none" /><path d="M0 15h20v5H0z" fill="#ffff00" stroke="none" /></Icon></Tool>
              <Tool $w={12} aria-label="Fill list"><Down /></Tool>
              <Tool $w={28} aria-label="Font color"><Icon w={20} h={20} stroke="#555" sw={2}><path d="M5 13L10 1l5 12M7 9h6" /><path d="M0 15h20v5H0z" fill="#ff0000" stroke="none" /></Icon></Tool>
              <Tool $w={10} aria-label="Font color list"><Down /></Tool>
            </Line>
          </Stack>
        </Group>

        <Group w={310} label="Alignment" launcher>
          <Stack>
            <Line>
              <Tool $w={26} aria-label="Top align"><Icon w={18} h={18}><path d={alignPath([[0, 18], [3, 15], [0, 18]], 0)} /></Icon></Tool>
              <Tool $w={26} aria-label="Middle align"><Icon w={18} h={18}><path d={alignPath([[0, 18], [3, 15], [0, 18], [3, 15]], 3)} /></Icon></Tool>
              <Tool $w={26} $on aria-label="Bottom align"><Icon w={18} h={18}><path d={alignPath([[0, 18], [3, 15], [0, 18]], 9)} /></Icon></Tool>
              <Divider $l={3} $r={3} />
              <Tool $w={28} aria-label="Orientation"><Icon w={18} h={18} sw={2}><text x="-2" y="11" transform="rotate(-45 6 8)" fontFamily="Open Sans" fontSize="13" fill="#555" stroke="none">ab</text><path d="M6 18L17 7M12 7h5v5" strokeWidth="1.500" /></Icon></Tool>
              <Tool $w={12} aria-label="Orientation list"><Down /></Tool>
            </Line>
            <Line>
              <Tool $w={26} aria-label="Align left"><Icon w={16} h={14}><path d={alignPath([[0, 15], [0, 10], [0, 15], [0, 10]], 0)} /></Icon></Tool>
              <Tool $w={26} aria-label="Center"><Icon w={16} h={14}><path d={alignPath([[0, 16], [3, 13], [0, 16], [3, 13]], 0)} /></Icon></Tool>
              <Tool $w={26} aria-label="Align right"><Icon w={16} h={14}><path d={alignPath([[1, 16], [6, 16], [1, 16], [6, 16]], 0)} /></Icon></Tool>
              <Divider $l={3} $r={3} />
              <Tool $w={28} aria-label="Decrease indent"><Icon w={18} h={16}><path d="M0 .5h18M9 4.500h9M9 8.500h9M9 12.500h9M0 15.500h18" /><path d="M0 8h8M4 4L1 8l3 4" stroke={blue} strokeWidth="2" /></Icon></Tool>
              <Tool $w={26} aria-label="Increase indent"><Icon w={18} h={16}><path d="M0 .5h18M9 4.500h9M9 8.500h9M9 12.500h9M0 15.500h18" /><path d="M0 8h8M4 4l3 4-3 4" stroke={blue} strokeWidth="2" /></Icon></Tool>
            </Line>
          </Stack>
          <TallDivider />
          <Stack $pad="10px 0 0 2px">
            <SmallButton $gap={6}><Icon w={18} h={18}><path d="M.5.5h12v17H.5z" fill="#fff" /><path d="M3 7.500h7M3 11.500h6M3 14.500h6M0 3.500h17" stroke={blue} /><path d="M13 4h4v6h-6M13 7l-3 3 3 3" stroke={blue} strokeWidth="2" /></Icon>Wrap Text</SmallButton>
            <SmallButton $gap={6}><Icon w={18} h={18}><path d="M.5.5h17v17H.5zM.5 4.500h17M.5 13.500h17M9.500.5v4M9.500 13.500v4" fill="#fff" /><path d="M3 9h12M6 6L3 9l3 3M12 6l3 3-3 3" stroke={blue} strokeWidth="1.500" /></Icon>Merge &amp; Center<ArrowSlot><Down /></ArrowSlot></SmallButton>
          </Stack>
        </Group>

        <Group w={161} label="Number" launcher>
          <Stack>
            <Line><Combo w={152} value="General" label="Number format" /></Line>
            <Line>
              <Tool $w={26} aria-label="Accounting format"><Icon w={19} h={20} stroke="none"><path d="M0 0h19v11H0z" fill={blue} /><path d="M3 2h13v6H3z" fill="#fff" /><circle cx="9" cy="5" r="3" fill={blue} /><path d="M11 8h8v9h-8zM6 12h8v7H6z" fill="#eac282" /><path d="M11 10.500h8M6 14.500h8M6 16.500h8M11 13.500h8" stroke="#fff" /></Icon></Tool>
              <Tool $w={14} aria-label="Currency list"><Down /></Tool>
              <Tool $w={24} aria-label="Percent"><Icon w={15} h={15} stroke="#555" sw={2}><circle cx="3.500" cy="4" r="2.500" strokeWidth="1.500" /><circle cx="11.500" cy="11" r="2.500" strokeWidth="1.500" /><path d="M12 0L3 15" strokeWidth="1.500" /></Icon></Tool>
              <Tool $w={24} aria-label="Comma"><Icon w={7} h={11} stroke="none"><path d="M1 3a3 3 0 1 1 6 1c0 3-2 6-5 7l-1-1c2-1 3-2 3-4-2 0-3-1-3-3z" fill="#555" /></Icon></Tool>
              <Divider $l={5} $r={5} />
              <Tool $w={26} aria-label="Increase decimal"><Icon w={17} h={18} stroke="none"><path d="M0 4l4-4v3h4v2H4v3z" fill={blue} /><text x="8" y="7" fontFamily="Open Sans" fontSize="9" fontWeight="600" fill="#555">.0</text><text x="2" y="18" fontFamily="Open Sans" fontSize="9" fontWeight="600" fill="#555">.00</text></Icon></Tool>
              <Tool $w={26} aria-label="Decrease decimal"><Icon w={17} h={18} stroke="none"><path d="M8 14l-4-4v3H0v2h4v3z" fill={blue} /><text x="3" y="7" fontFamily="Open Sans" fontSize="9" fontWeight="600" fill="#555">.00</text><text x="8" y="18" fontFamily="Open Sans" fontSize="9" fontWeight="600" fill="#555">.0</text></Icon></Tool>
            </Line>
          </Stack>
        </Group>

        <Group w={584} label="Styles" grow indent={4}>
          <BigButton $w={88}>
            <BigIcon><Icon w={38} h={38} stroke="none"><GridDoc /><path d="M11 1h6v7h-6zM11 18h9v7h-9z" fill="#d9603f" /><path d="M11 9h11v8H11zM11 26h6v7h-6z" fill={blue} /><path d="M19.500 22.500h18v15h-18z" fill="#fff" stroke="#666" /><path d="M24 28.500h9M24 32.500h9M31 25l-5 11" stroke="#444" strokeWidth="1.500" /></Icon></BigIcon>
            <BigText>Conditional</BigText>
            <BigText>Formatting <Down /></BigText>
          </BigButton>
          <BigButton $w={71}>
            <BigIcon><Icon w={38} h={38} stroke="none"><GridDoc /><path d="M8.500 8.500h25v25h-25z" fill="#c0d3ea" /><path d="M8.500 17.500h25M8.500 25.500h25M17.500 8v25M25.500 8v25" stroke="#aebccc" /><path d="M38 9L24 26l4 4 10-12z" fill="#777" stroke="#fff" /><path d="M10 38c6-2 5-11 11-12 5 1 6 7 1 10-3 2-8 2-12 2z" fill={blue} stroke="#fff" /></Icon></BigIcon>
            <BigText>Format as</BigText>
            <BigText>Table <Down /></BigText>
          </BigButton>
          <Gallery>
            <Swatches>
              <Swatch $bg="#fff" $fg="#000" $picked>Normal</Swatch>
              <Swatch $bg="#ffc7ce" $fg="#9c0006">Bad</Swatch>
              <Swatch $bg="#c6efce" $fg="#006100">Good</Swatch>
              <Swatch $bg="#ffeb9c" $fg="#9c6500">Neutral</Swatch>
              <Swatch $bg="#f2f2f2" $fg="#fa7d00" $edge="1px solid #7f7f7f" $bold>Calculation</Swatch>
              <Swatch $bg="#a5a5a5" $fg="#fff" $edge="3px double #3f3f3f" $bold>Check Cell</Swatch>
            </Swatches>
            <GalleryScroll>
              <GalleryButton $off aria-label="Styles up"><Icon w={6} h={4} stroke="none"><path d="M0 4h6L3 0z" fill="#bbb" /></Icon></GalleryButton>
              <GalleryButton aria-label="Styles down"><Icon w={6} h={4} stroke="none"><path d="M0 0h6L3 4z" fill="#666" /></Icon></GalleryButton>
              <GalleryButton aria-label="More styles"><Icon w={7} h={7} stroke="none"><path d="M0 0h7v1H0zM0 3h7L3.500 7z" fill="#666" /></Icon></GalleryButton>
            </GalleryScroll>
          </Gallery>
        </Group>

        <Group w={161} label="Cells" indent={4}>
          <BigButton $w={50}>
            <BigIcon><Icon w={36} h={37} stroke="#777"><path d="M3.500 1.500h18v6h-18zM12.500 1.500v6M3.500 24.500h18v11h-18zM3.500 30.500h18M12.500 24.500v11" fill="#fff" /><path d="M17.500 12.500h18v6h-18zM26.500 12.500v6" fill="#c0d3ea" /><path d="M1 15.500h13M7 10l-5 5.500L7 21" stroke={blue} strokeWidth="3" /></Icon></BigIcon>
            <BigText>Insert</BigText><Down />
          </BigButton>
          <BigButton $w={50}>
            <BigIcon><Icon w={36} h={37} stroke="#777"><path d="M1.500 1.500h18v6h-18zM10.500 1.500v6M1.500 21.500h18v12h-18zM1.500 27.500h18M10.500 21.500v12" fill="#fff" /><path d="M8.500 11.500h12v6h-12z" fill="#c0d3ea" /><path d="M19 8l15 14M34 8L19 22" stroke="#d9603f" strokeWidth="3" /></Icon></BigIcon>
            <BigText>Delete</BigText><Down />
          </BigButton>
          <BigButton $w={52}>
            <BigIcon><Icon w={34} h={37} stroke="#888"><path d="M.5 8.500h33v24H.5zM.5 14.500h33M.5 26.500h33M8.500 8.500v24M18.500 8.500v24M26.500 8.500v24M.5 32.500v4h10l3-4M11 36.500h8l4-4" fill="#fff" /><path d="M9 15h9v11H9z" fill={blue} stroke="none" /><path d="M.5 0v6M27.500 0v6M4 3h20M7 0L4 3l3 3M21 0l3 3-3 3" stroke={blue} strokeWidth="2" /></Icon></BigIcon>
            <BigText>Format</BigText><Down />
          </BigButton>
        </Group>

        <Group w={222} label="Editing">
          <Stack $pad="0 0 0 9px" $gap={0} $w={106}>
            <SmallButton><Icon w={16} h={16} stroke="#555" sw={2}><path d="M15 3V1H2l6 7-6 7h13v-3" /></Icon>AutoSum<ArrowSlot><Down /></ArrowSlot></SmallButton>
            <SmallButton><Icon w={16} h={17}><path d="M.5.5h15v16H.5z" fill="#fff" /><path d="M0 0h16v3H0z" fill="#777" stroke="none" /><path d="M8 5v9M4 10l4 4 4-4" stroke={blue} strokeWidth="2" /></Icon>Fill<Down /></SmallButton>
            <SmallButton><Icon w={16} h={16} stroke="none"><path d="M0 11L9 0l6 4-8 11H3z" fill="#e8879b" /><path d="M3 7l6 5" stroke="#fff" /><path d="M8 15.500h8" stroke="#666" /></Icon>Clear<Down /></SmallButton>
          </Stack>
          <BigButton $w={60}>
            <BigIcon><Icon w={34} h={34} stroke="none"><path d="M1 14L6 2l5 12M3 10h6" fill="none" stroke={blue} strokeWidth="2" /><path d="M1 20h9L1 31h10" fill="none" stroke="#9b63bd" strokeWidth="2" /><path d="M16 8h18l-7 8v9l-4-2v-7z" fill="#777" /></Icon></BigIcon>
            <BigText>Sort &amp;</BigText>
            <BigText>Filter <Down /></BigText>
          </BigButton>
          <BigButton $w={46}>
            <BigIcon><Icon w={34} h={36} stroke={blue}><path d="M1 34l10-11" strokeWidth="5" /><circle cx="21" cy="13" r="12" fill="#fff" strokeWidth="2" /></Icon></BigIcon>
            <BigText>Find &amp;</BigText>
            <BigText>Select <Down /></BigText>
          </BigButton>
        </Group>
        <RibbonEnd><button aria-label="Collapse ribbon"><Icon w={11} h={7} sw={2}><path d="M1 6l4.500-5L10 6" /></Icon></button></RibbonEnd>
      </Ribbon>

      <FormulaRow>
        <NameBox><NameInput aria-label="Name box" defaultValue="L6" /><Down /></NameBox>
        <Grip><DotsV /></Grip>
        <FxBox>
          <Tool $w={44} aria-label="Cancel"><Icon w={15} h={14} stroke="#bfbfbf" sw={2}><path d="M1 0l13 14M14 0L1 14" /></Icon></Tool>
          <Tool $w={46} aria-label="Enter"><Icon w={17} h={14} stroke="#bfbfbf" sw={3}><path d="M1 8l5 5L16 1" /></Icon></Tool>
          <Tool $w={42} aria-label="Insert function"><FxText>fx</FxText></Tool>
        </FxBox>
        <FormulaBox>
          <FormulaInput aria-label="Formula" defaultValue={question} />
          <Icon w={10} h={6} stroke="#666" sw={3}><path d="M1 1l4 4 4-4" /></Icon>
        </FormulaBox>
      </FormulaRow>

      <Workspace>
        <SheetView><Worksheet /></SheetView>
        <ScrollColumn>
          <ScrollButton aria-label="Scroll up"><Icon w={9} h={5} stroke="none"><path d="M0 5h9L4.500 0z" fill="#777" /></Icon></ScrollButton>
          <TrackV><ThumbV /></TrackV>
          <ScrollButton aria-label="Scroll down"><Icon w={9} h={5} stroke="none"><path d="M0 0h9L4.500 5z" fill="#777" /></Icon></ScrollButton>
        </ScrollColumn>
      </Workspace>

      <SheetTabs>
        <TabNav>
          <Icon w={5} h={9} stroke="none"><path d="M5 0v9L0 4.500z" fill="#c0c0c0" /></Icon>
          <Icon w={5} h={9} stroke="none"><path d="M0 0v9l5-4.500z" fill="#c0c0c0" /></Icon>
        </TabNav>
        <SheetTab $on>TK 152</SheetTab>
        <SheetTab>TK 153</SheetTab>
        <SheetTab>TK 1551</SheetTab>
        <AddSheet aria-label="New sheet"><Icon w={20} h={20} stroke="#777"><circle cx="10" cy="10" r="9.500" /><path d="M5 10h10M10 5v10" strokeWidth="2" /></Icon></AddSheet>
        <HScroll>
          <HGrip><DotsV /></HGrip>
          <ScrollButton aria-label="Scroll left"><Icon w={5} h={9} stroke="none"><path d="M5 0v9L0 4.500z" fill="#666" /></Icon></ScrollButton>
          <TrackH><ThumbH /></TrackH>
          <ScrollButton aria-label="Scroll right"><Icon w={5} h={9} stroke="none"><path d="M0 0v9l5-4.500z" fill="#666" /></Icon></ScrollButton>
        </HScroll>
      </SheetTabs>

      <StatusBar>
        Ready
        <Views>
          <ViewButton $on aria-label="Normal view"><Icon w={14} h={13}><path d="M.5.5h13v12H.5zM.5 4.500h13M.5 8.500h13M5.500.5v12M9.500.5v12" /></Icon></ViewButton>
          <ViewButton aria-label="Page layout view"><Icon w={14} h={13}><path d="M.5.5h13v12H.5zM3.500 2.500h7v8h-7zM5 4.500h4M5 6.500h4M5 8.500h4" /></Icon></ViewButton>
          <ViewButton aria-label="Page break view"><Icon w={14} h={13}><path d="M.5.5h13v12H.5zM4.500.5v7h5v-7" /></Icon></ViewButton>
        </Views>
        <ZoomButton aria-label="Zoom out"><Icon w={10} h={10} sw={2}><path d="M0 5h10" /></Icon></ZoomButton>
        <ZoomRange type="range" aria-label="Zoom" min={0} max={200} defaultValue={100} />
        <ZoomButton aria-label="Zoom in"><Icon w={10} h={10} sw={2}><path d="M0 5h10M5 0v10" /></Icon></ZoomButton>
        <ZoomLevel>100 %</ZoomLevel>
      </StatusBar>

      <Taskbar>
        <TaskButton $w={60} aria-label="Start"><Icon w={20} h={20} stroke="none"><path d="M0 3l8-1v7.500H0zM9 2l11-2v9.500H9zM0 10.500h8V18l-8-1zM9 10.500h11V20L9 18z" fill="#fff" /></Icon></TaskButton>
        <TaskButton $w={60} aria-label="Cortana"><Icon w={20} h={20} stroke="#fff" sw={2}><circle cx="10" cy="10" r="8.500" /></Icon></TaskButton>
        <TaskButton $w={65} aria-label="Edge"><Icon w={26} h={26} stroke="none"><path d="M0 12C1 4 6 0 13 0c8 0 12 5 12 11v4H8c0 7 9 7 15 4v5c-3 1.500-6 2-9 2-6 0-10-4-10-9 0-4 2-7 6-9C6 8 3 9 0 12zm8.500-2H17c0-5-7.500-5-8.500 0z" fill="#0a7bd8" fillRule="evenodd" /></Icon></TaskButton>
        <TaskButton $state="stacked" aria-label="File Explorer"><Icon w={28} h={24} stroke="none"><path d="M0 1h11l2 3h14v19H0z" fill="#e8b33f" /><path d="M1 5h27v18H1z" fill="#fde79a" /><path d="M5 12h18v12h-5v-6h-8v6H5z" fill="#35a9e0" /></Icon></TaskButton>
        <TaskButton aria-label="Store"><Icon w={26} h={30} stroke="none"><path d="M0 8l26-3v25L0 26z" fill="#fff" /><path d="M6 9c0-10 13-10 13-2" fill="none" stroke="#fff" strokeWidth="1.500" /><path d="M3 14l5-.5V18H3zM9 13.500l6-.5v5H9zM3 19h5v4.500L3 23zM9 19h6v5.500l-6-1z" fill="#0b151c" /></Icon></TaskButton>
        <TaskButton $state="open" aria-label="Internet Explorer"><Icon w={30} h={28} stroke="none"><path d="M4 15C4 8 9 4 15 4s12 5 11 13H11c1 6 8 5 14 3-4 9-21 9-21-5zm7-3h9c0-5-8-5-9 0z" fill="#56c7f5" fillRule="evenodd" /><path d="M3 27C-3 22 14 3 26 1c4 0 3 4 1 7" fill="none" stroke="#f6c52b" strokeWidth="2.500" /></Icon></TaskButton>
        <TaskButton aria-label="Word"><OfficeIcon color="#2b579a" letter="W"><path d="M17 8.500h8M17 11.500h8M17 14.500h8M17 17.500h8M17 20.500h8" stroke="#2b579a" /></OfficeIcon></TaskButton>
        <TaskButton $state="active" aria-label="Excel"><OfficeIcon color="#217346" letter="X"><path d="M18 7.500h7M18 10.500h7M18 13.500h7M18 16.500h7M18 19.500h7M21.500 6v16" stroke="#217346" strokeWidth="1.500" /></OfficeIcon></TaskButton>
        <TaskButton aria-label="Outlook"><Icon w={28} h={28} stroke="none"><path d="M15 6h13v16H15z" fill="#fff" /><path d="M16 9l5 6 7-8" fill="none" stroke="#0a6ebd" strokeWidth="2" /><path d="M0 3L16 0v28L0 25z" fill="#0a6ebd" /><circle cx="8" cy="14" r="4" fill="none" stroke="#fff" strokeWidth="2.500" /></Icon></TaskButton>
        <TaskButton $state="open" aria-label="Firefox"><Icon w={28} h={28} stroke="none"><circle cx="14" cy="13" r="13" fill="#2d5fa8" /><path d="M3 3l4 3c4-2 7 0 8 3l-5 3c1 5 7 5 10 2-1 6-7 7-11 5 7 6 17 0 15-9l-3-5c5 2 7 8 6 12C24 32-2 31 1 11z" fill="#ef7c21" /><path d="M22 3c5 3 7 9 5 14-1 5-5 8-9 9 6-5 7-14 4-23z" fill="#f9c83a" /></Icon></TaskButton>
        <TaskButton $state="open" aria-label="Skype"><Icon w={27} h={27} stroke="none"><circle cx="9" cy="9" r="8.500" fill="#00aff0" /><circle cx="18" cy="18" r="8.500" fill="#00aff0" /><circle cx="13.500" cy="13.500" r="12" fill="#00aff0" /><path d="M18.500 9.500c-1-4-10-4-10 0 0 4.500 10 3 10 7.500 0 4-9.500 4-10.500 0" fill="none" stroke="#fff" strokeWidth="3" strokeLinecap="round" /></Icon></TaskButton>
        <Tray>
          <TrayButton $w={28} aria-label="Hidden icons"><Icon w={16} h={9} stroke="#fff" sw={2}><path d="M1 8l7-7 7 7" strokeWidth="1.500" /></Icon></TrayButton>
          <TrayButton $w={32} aria-label="Battery"><Icon w={20} h={14} stroke="#fff"><path d="M5.500 3.500h13v9h-13zM19.500 6v4M1 2.500h4v3H1zM1.500 0v2M4.500 0v2M3 6v5" /><path d="M7 5h10v6H7z" fill="#fff" /></Icon></TrayButton>
          <TrayButton $w={30} aria-label="Network"><Icon w={17} h={15} stroke="#fff" sw={2}><path d="M1 15C1 7 7 1 16 1" stroke="#aaa" strokeWidth="1.500" /><path d="M5 15c0-6 4-10 11-10M9 15c0-4 3-6 7-6" strokeWidth="1.500" /><circle cx="14" cy="13" r="1" /></Icon></TrayButton>
          <TrayButton $w={28} aria-label="Volume"><Icon w={19} h={14} stroke="#fff"><path d="M.5 4.500H3l4-4v13l-4-4H.5zM11 4l7 7M18 4l-7 7" strokeWidth="1.500" /></Icon></TrayButton>
          <TrayButton $w={48}>ENG</TrayButton>
          <TrayButton $w={82}>6:58 CH<br />14/09/2017</TrayButton>
          <TrayButton $w={68} aria-label="Notifications"><Icon w={20} h={20} stroke="#fff"><path d="M.5.500h19v15h-6l-3.500 4v-4H.5z" strokeWidth="1.500" /></Icon></TrayButton>
          <ShowDesktop aria-label="Show desktop" />
        </Tray>
      </Taskbar>
    </Screen>
  );
}
